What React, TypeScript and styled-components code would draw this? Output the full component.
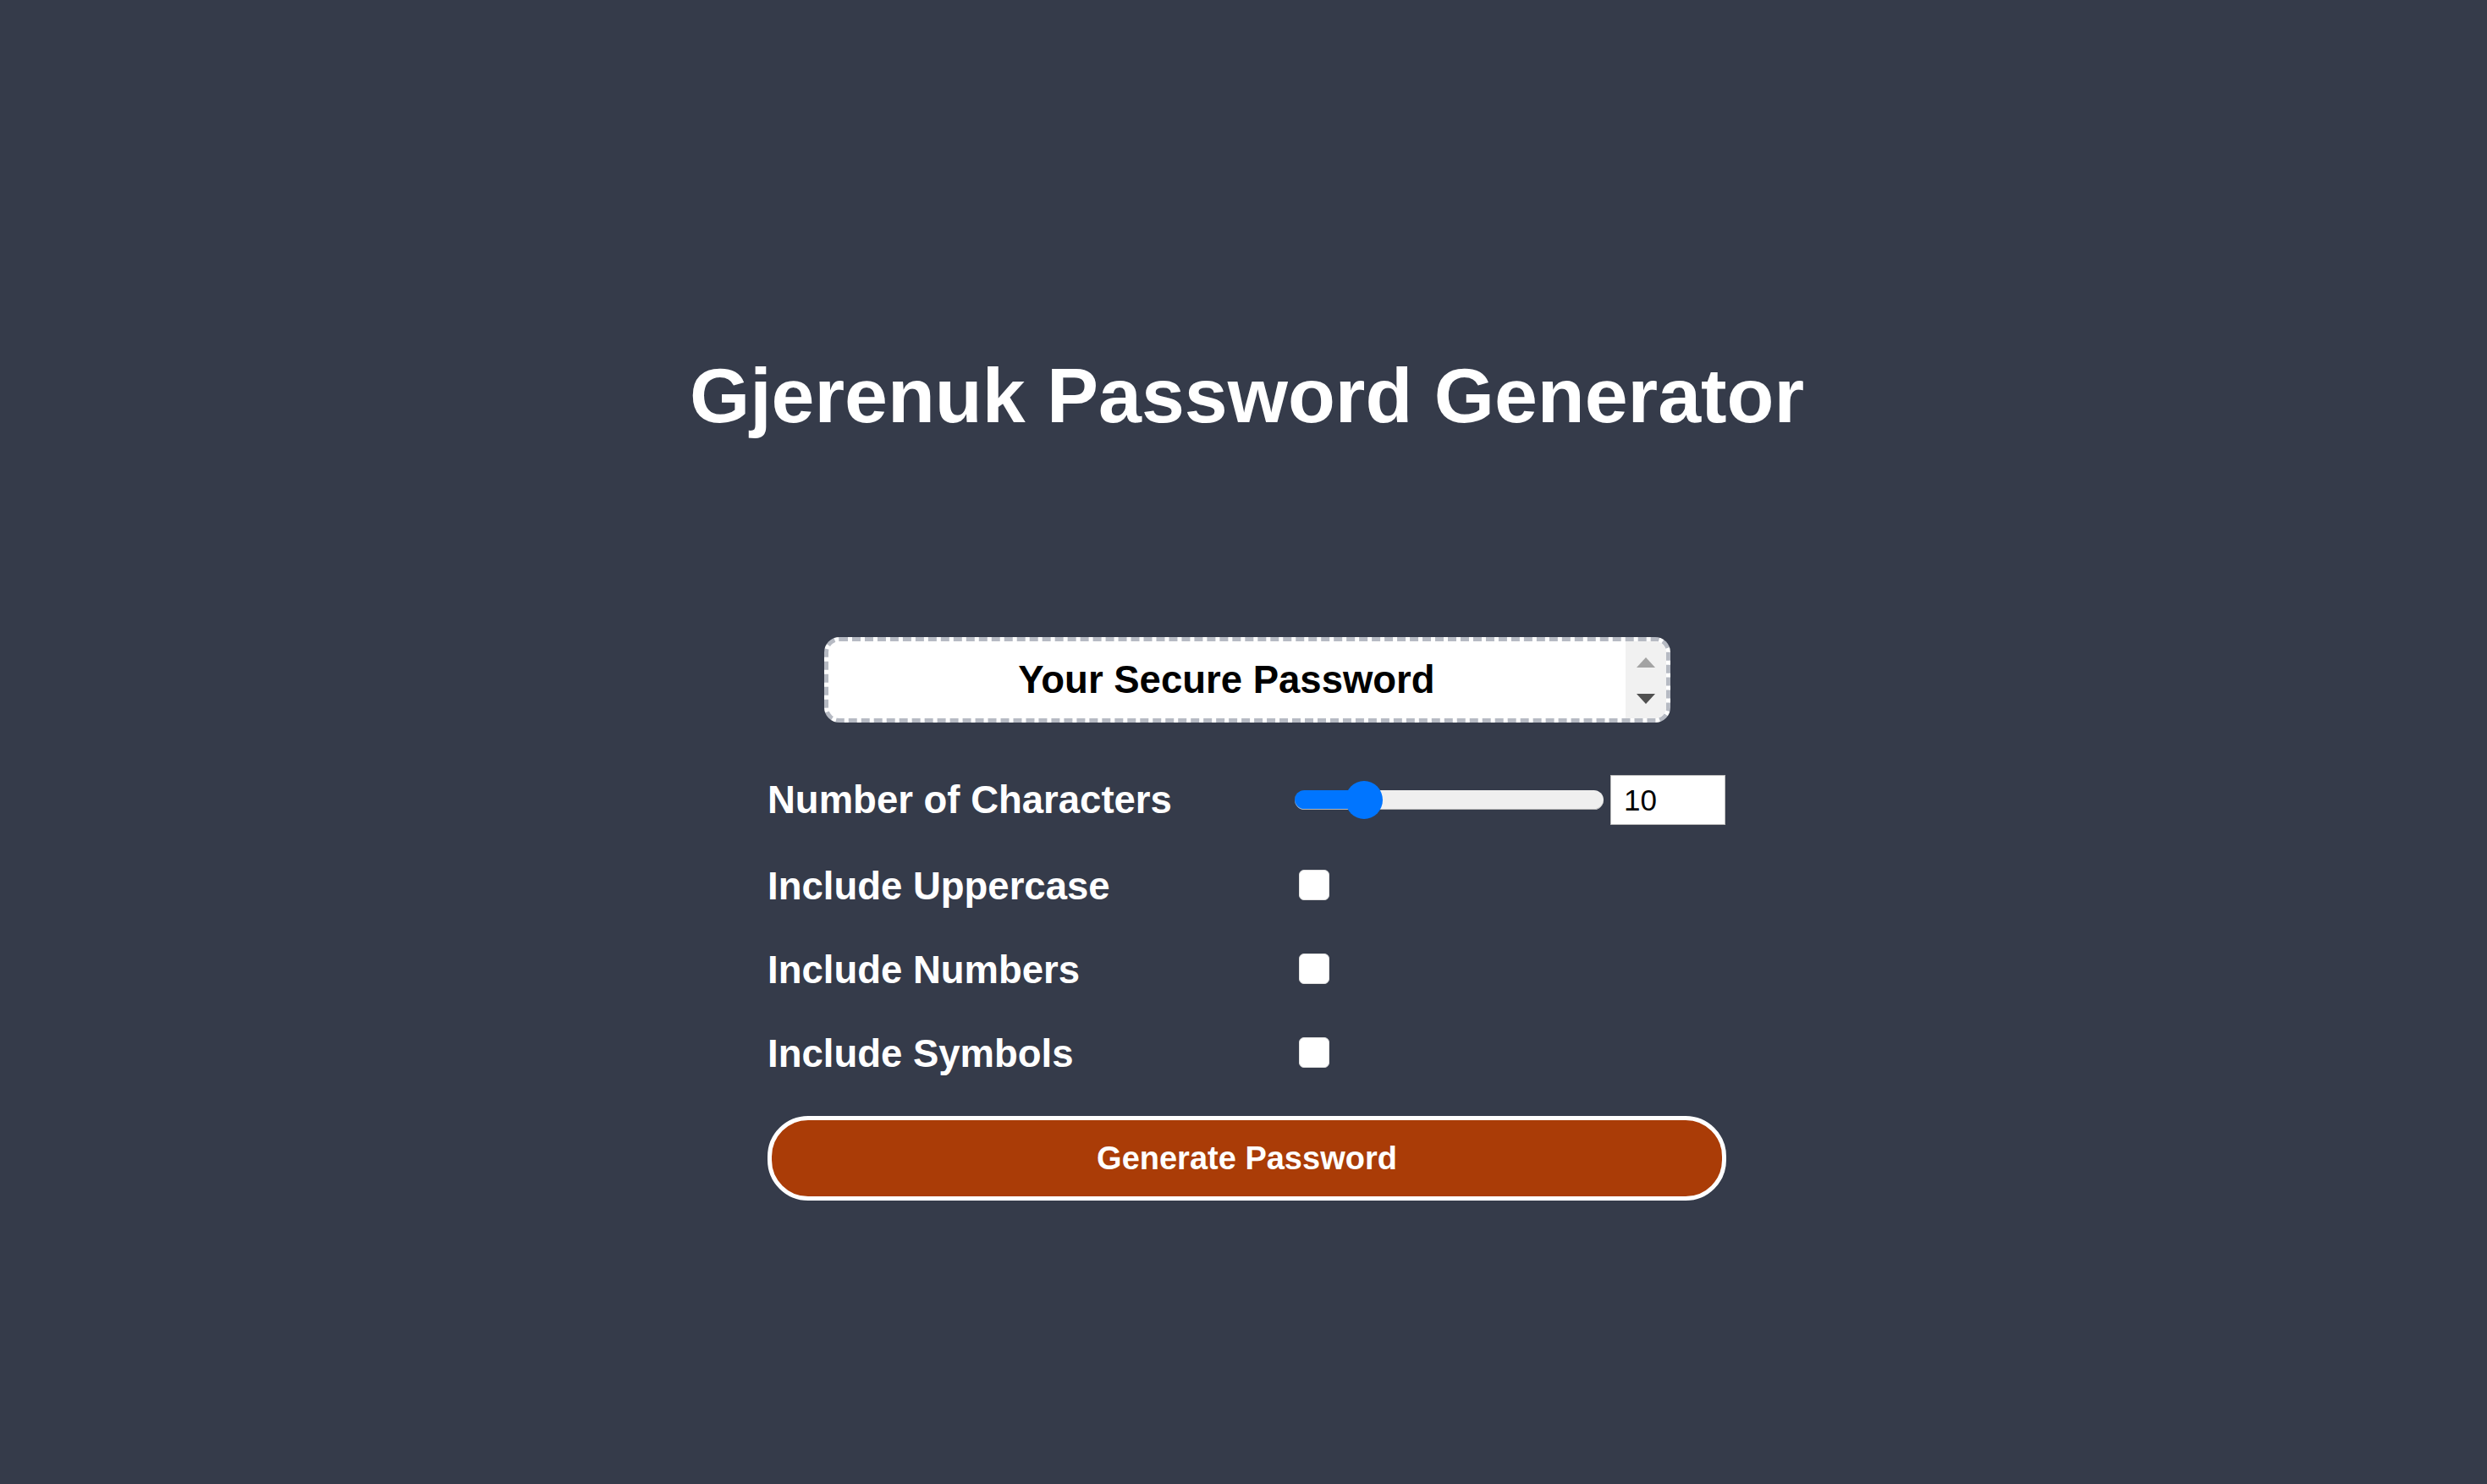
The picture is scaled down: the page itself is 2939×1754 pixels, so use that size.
import React, { useState } from "react";
import styled, { createGlobalStyle } from "styled-components";

const GlobalStyle = createGlobalStyle`
  html, body {
    margin: 0;
    padding: 0;
    background: #353b4a;
  }
  body {
    font-family: "Liberation Sans", Arial, Helvetica, sans-serif;
    color: #ffffff;
  }
  * { box-sizing: border-box; }
`;

const Page = styled.main`
  min-height: 100vh;
  display: flex;
  flex-direction: column;
  align-items: center;
  padding-left: 8px;
`;

const Title = styled.h1`
  margin: 415px 0 0 0;
  font-size: 91.5px;
  font-weight: 700;
  line-height: normal;
  color: #ffffff;
  white-space: nowrap;
`;

const PasswordBox = styled.div`
  margin-top: 233px;
  width: 1000px;
  height: 101px;
  border: 5px dashed #b6bac3;
  border-radius: 18px;
  background: #ffffff;
  display: flex;
  overflow: hidden;
`;

const PasswordText = styled.div`
  flex: 1;
  display: flex;
  align-items: center;
  justify-content: center;
  font-size: 45.5px;
  font-weight: 700;
  color: #000000;
  line-height: normal;
`;

const ScrollRail = styled.div`
  width: 48px;
  background: #f1f1f1;
  display: flex;
  flex-direction: column;
  align-items: center;
  justify-content: space-between;
  padding: 19px 0 17px;
`;

const Arrow = styled.svg<{ $color: string }>`
  display: block;
  width: 22px;
  height: 12px;
  fill: ${(p) => p.$color};
`;

const Form = styled.section`
  margin-top: 62px;
  width: 1133px;
  display: flex;
  flex-direction: column;
  gap: 47px;
`;

const Row = styled.div`
  display: grid;
  grid-template-columns: 623px 1fr;
  align-items: center;
`;

const Label = styled.label`
  font-size: 45.5px;
  font-weight: 700;
  line-height: normal;
  color: #ffffff;
  white-space: nowrap;
`;

const SliderGroup = styled.div`
  display: flex;
  align-items: center;
  gap: 8px;
`;

const Range = styled.input`
  -webkit-appearance: none;
  appearance: none;
  width: 365px;
  height: 45px;
  margin: 0;
  background: transparent;
  outline: none;

  &::-webkit-slider-runnable-track {
    height: 23px;
    border-radius: 12px;
    background: linear-gradient(
      to right,
      #0075ff 0,
      #0075ff var(--fill),
      #efefef var(--fill),
      #efefef 100%
    );
    box-shadow: inset 0 -1px 0 #b9b9b9;
  }

  &::-webkit-slider-thumb {
    -webkit-appearance: none;
    appearance: none;
    width: 44px;
    height: 45px;
    margin-top: -11px;
    border-radius: 50%;
    background: #0075ff;
    border: none;
  }
`;

const NumberInput = styled.input`
  width: 136px;
  height: 59px;
  margin: 0;
  padding: 0 0 0 15px;
  border: 1px solid #bdbdbd;
  background: #ffffff;
  font-family: "Liberation Sans", Arial, sans-serif;
  font-size: 35px;
  color: #000000;
  outline: none;
  -moz-appearance: textfield;

  &::-webkit-inner-spin-button,
  &::-webkit-outer-spin-button {
    -webkit-appearance: none;
    margin: 0;
  }
`;

const Check = styled.input`
  -webkit-appearance: none;
  appearance: none;
  width: 36px;
  height: 36px;
  margin: 0 0 0 5px;
  border-radius: 6px;
  background: #ffffff;
  border: 1px solid #e2e2e2;
`;

const GenerateButton = styled.button`
  width: 100%;
  height: 100px;
  border: 5px solid #ffffff;
  border-radius: 48px;
  background: #aa3c07;
  color: #ffffff;
  font-family: "Liberation Sans", Arial, sans-serif;
  font-size: 38px;
  font-weight: 700;
  cursor: pointer;
`;

const MIN = 4;
const MAX = 36;
const RANGE_W = 365;
const THUMB_W = 44;

export default function App() {
  const [length, setLength] = useState(10);
  const [upper, setUpper] = useState(false);
  const [numbers, setNumbers] = useState(false);
  const [symbols, setSymbols] = useState(false);

  const frac = (length - MIN) / (MAX - MIN);
  const fillPx = THUMB_W / 2 + frac * (RANGE_W - THUMB_W);

  return (
    <>
      <GlobalStyle />
      <Page>
        <Title>Gjerenuk Password Generator</Title>

        <PasswordBox>
          <PasswordText>Your Secure Password</PasswordText>
          <ScrollRail>
            <Arrow $color="#a3a3a3" viewBox="0 0 22 12">
              <polygon points="11,0 22,12 0,12" />
            </Arrow>
            <Arrow $color="#505050" viewBox="0 0 22 12">
              <polygon points="0,0 22,0 11,12" />
            </Arrow>
          </ScrollRail>
        </PasswordBox>

        <Form>
          <Row>
            <Label htmlFor="len">Number of Characters</Label>
            <SliderGroup>
              <Range
                id="len"
                type="range"
                min={MIN}
                max={MAX}
                value={length}
                onChange={(e) => setLength(Number(e.target.value))}
                style={{ ["--fill" as string]: `${fillPx}px` } as React.CSSProperties}
              />
              <NumberInput
                type="number"
                min={MIN}
                max={MAX}
                value={length}
                onChange={(e) => setLength(Number(e.target.value))}
              />
            </SliderGroup>
          </Row>
          <Row>
            <Label htmlFor="up">Include Uppercase</Label>
            <div>
              <Check id="up" type="checkbox" checked={upper} onChange={() => setUpper(!upper)} />
            </div>
          </Row>
          <Row>
            <Label htmlFor="num">Include Numbers</Label>
            <div>
              <Check id="num" type="checkbox" checked={numbers} onChange={() => setNumbers(!numbers)} />
            </div>
          </Row>
          <Row>
            <Label htmlFor="sym">Include Symbols</Label>
            <div>
              <Check id="sym" type="checkbox" checked={symbols} onChange={() => setSymbols(!symbols)} />
            </div>
          </Row>
          <GenerateButton type="button">Generate Password</GenerateButton>
        </Form>
      </Page>
    </>
  );
}
